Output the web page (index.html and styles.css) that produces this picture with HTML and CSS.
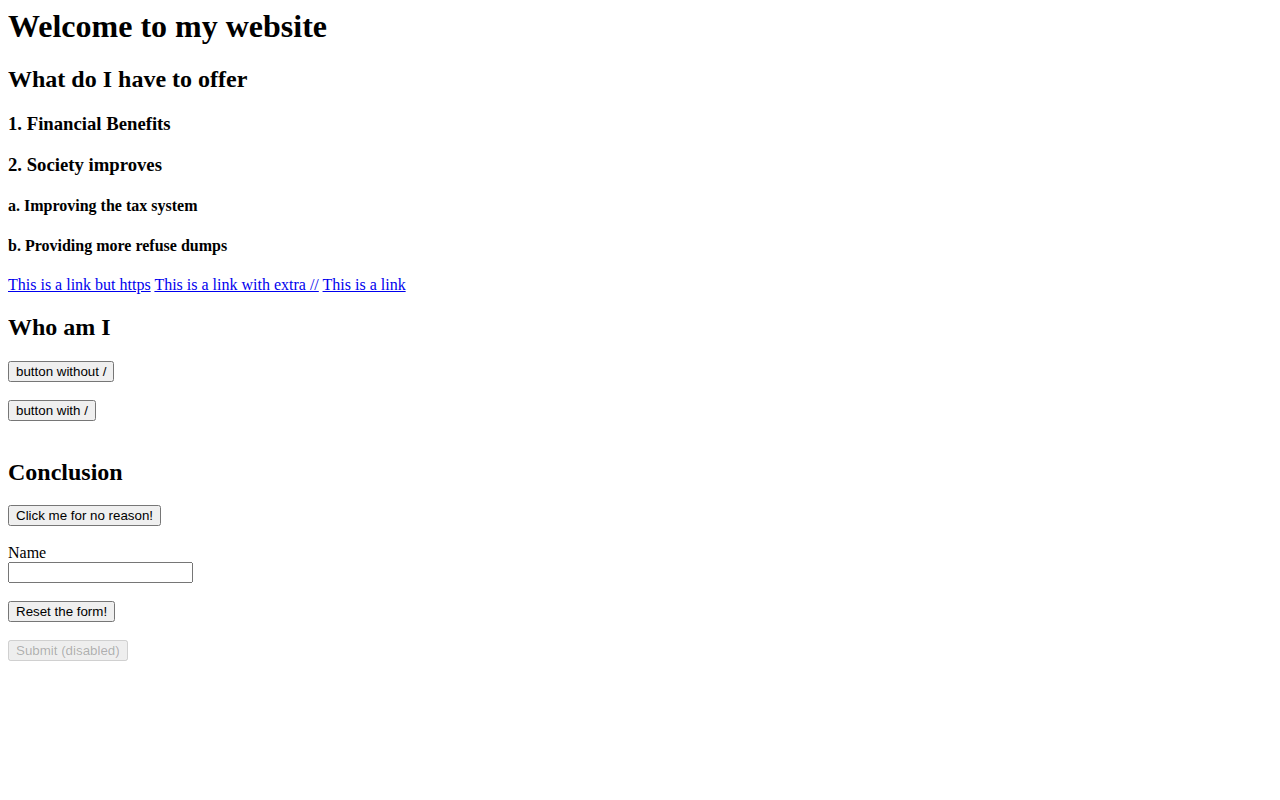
FILE: index.html
```html
<!DOCTYPE html>
<html>
<head>
<meta charset="utf-8">
<title>Welcome to my website</title>
<link rel="stylesheet" href="styles.css">
</head>
<body class="page">
<h1 class="title">Welcome to my website</h1>
<h2>What do I have to offer</h2>
<h3>1. Financial Benefits</h3>
<h3>2. Society improves</h3>
<h4>a. Improving the tax system</h4>
<h4>b. Providing more refuse dumps</h4>
<p><a href="#">This is a link but https</a> <a href="#">This is a link with extra //</a> <a href="#">This is a link</a></p>
<h2>Who am I</h2>
<form class="quirk-form">
<p><button type="button">button without /</button></p>
</form>
<form class="quirk-form">
<p class="last-in-form"><button type="button">button with /</button></p>
</form>
<h2 class="conclusion">Conclusion</h2>
<p><button type="button">Click me for no reason!</button></p>
<form class="quirk-form">
<label for="name">Name</label><br>
<input id="name" class="field" type="text">
<p><button type="reset">Reset the form!</button></p>
<p><button type="submit" disabled>Submit (disabled)</button></p>
</form>
</body>
</html>
```
FILE: styles.css
```css
.page {
  margin: 8px;
  font-family: "Liberation Serif", "Times New Roman", serif;
  font-size: 16px;
  color: #000;
  background: #fff;
}

.title {
  margin-top: 0;
}

.quirk-form {
  margin: 0;
}

.last-in-form {
  margin-bottom: 36px;
}

.conclusion {
  margin-bottom: 18.9px;
}

button,
input {
  font-family: "Liberation Sans", Arial, sans-serif;
  font-size: 13.333px;
  margin-bottom: 2px;
}

.field {
  width: 185px;
  box-sizing: border-box;
}

a {
  color: #0000ee;
}
```
